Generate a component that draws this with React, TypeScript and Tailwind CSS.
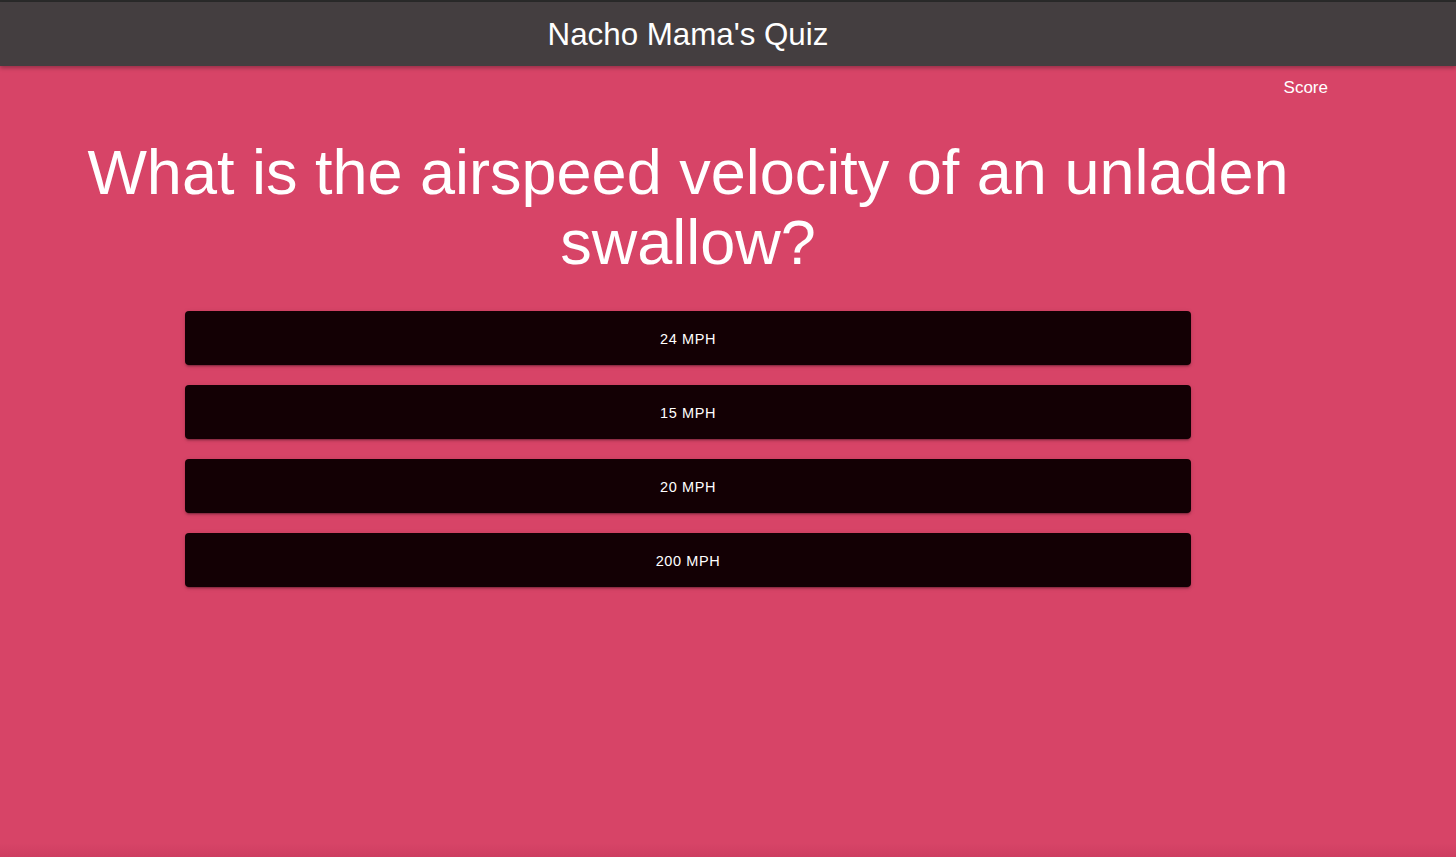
import React from "react";

const answers = ["24 MPH", "15 MPH", "20 MPH", "200 MPH"];

export default function App() {
  return (
    <div
      className="relative w-full h-[857px] overflow-hidden bg-[#d74467] flex flex-col"
      style={{ fontFamily: '"Liberation Sans", Arial, Helvetica, sans-serif' }}
    >
      <div className="h-[2px] bg-[#2a2a2a]" />
      <header className="relative z-10 h-[64px] bg-[#443e40] shadow-[0_2px_4px_rgba(0,0,0,0.3)] flex items-center justify-center pr-[80px]">
        <h1 className="text-white text-[31.3px] leading-none mt-[1px]">Nacho Mama's Quiz</h1>
      </header>
      <main className="flex-1 flex flex-col w-[1376px] pt-[10px]">
        <div className="flex justify-end pr-[48px]">
          <span className="text-white text-[17px] leading-[24px]">Score</span>
        </div>
        <h2 className="mt-[37px] text-white text-[63px] leading-[70px] text-center">
          What is the airspeed velocity of an unladen swallow?
        </h2>
        <div className="mt-[34px] flex flex-col items-center gap-[20px]">
          {answers.map((a) => (
            <button
              key={a}
              className="w-[1006px] h-[54px] rounded-[4px] bg-[#130004] text-white text-[14.5px] font-normal uppercase tracking-[0.6px] pt-[3px] shadow-[0_3px_1px_-2px_rgba(0,0,0,0.2),0_2px_2px_0_rgba(0,0,0,0.14),0_1px_5px_0_rgba(0,0,0,0.12)]"
            >
              {a}
            </button>
          ))}
        </div>
      </main>
      <div className="absolute bottom-0 left-0 right-0 h-[14px] bg-gradient-to-b from-transparent to-[rgba(150,20,60,0.15)]" />
    </div>
  );
}
